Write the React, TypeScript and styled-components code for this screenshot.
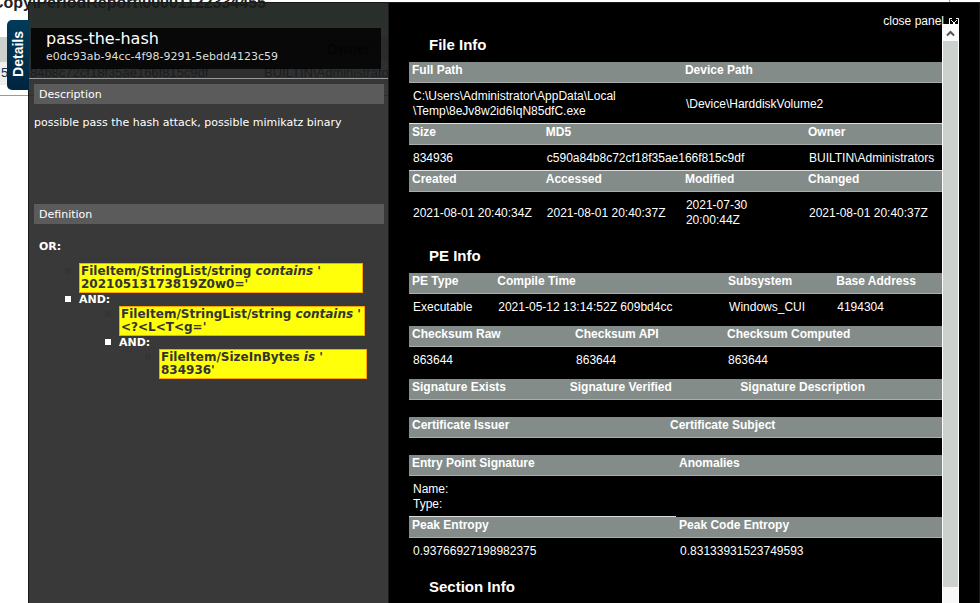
import React from 'react';
import styled, { createGlobalStyle } from 'styled-components';

const GlobalStyle = createGlobalStyle`
  *, *::before, *::after { box-sizing: border-box; }
  body { margin: 0; background: #fff; font-family: "Liberation Sans", Arial, sans-serif; }
  h1, h2, h3, p, ul { margin: 0; padding: 0; }
  button { border: 0; padding: 0; background: none; font: inherit; cursor: pointer; }
`;

const Page = styled.div`
  position: relative;
  min-height: 100vh;
  overflow: hidden;
`;

const Backdrop = styled.div`
  position: absolute;
  inset: 0;
  overflow: hidden;
`;

const BackTitle = styled.div`
  height: 45px;
  margin: -8px 30px 0 -8px;
  border-right: 1px solid #999;
  font-size: 16px;
  line-height: 22px;
  font-weight: bold;
  color: #222;
  white-space: nowrap;
`;

const BackRow = styled.div<{ $head?: boolean }>`
  display: grid;
  grid-template-columns: 264px 1fr;
  height: ${(p) => (p.$head ? 25 : 23)}px;
  padding-top: ${(p) => (p.$head ? 4 : 3)}px;
  background: ${(p) => (p.$head ? '#cdd1ce' : '#eeeeee')};
  color: ${(p) => (p.$head ? '#000' : '#0b3550')};
  font-size: ${(p) => (p.$head ? 14 : 13)}px;
  line-height: 16px;
  font-weight: ${(p) => (p.$head ? 'bold' : 'normal')};
`;

const BackCell = styled.span<{ $indent?: number }>`
  padding-left: ${(p) => p.$indent || 0}px;
  white-space: nowrap;
`;

const BackRule = styled.div`
  height: 11px;
  border-bottom: 1px solid #999;
`;

const Tab = styled.button`
  position: absolute;
  left: 7px;
  top: 20px;
  width: 22px;
  height: 70px;
  border-radius: 5px 0 0 5px;
  background: linear-gradient(#003c5a, #002540);
  color: #fff;
  font-size: 14px;
  font-weight: bold;
`;

const TabLabel = styled.span`
  display: inline-block;
  writing-mode: vertical-rl;
  transform: rotate(180deg);
  line-height: 20px;
`;

const Drawer = styled.section`
  position: relative;
  display: flex;
  margin: 2px 0 0 28px;
  height: calc(100vh - 2px);
  border-left: 1px solid #1a1a1a;
`;

const Summary = styled.aside`
  flex: 0 0 360px;
  border-top: 1px solid #1a1a1a;
  border-right: 1px solid #1a1a1a;
  background: rgba(28, 28, 28, 0.87);
  color: #fff;
  font-family: "DejaVu Sans", Verdana, sans-serif;
  font-size: 11px;
  line-height: 13px;
`;

const SummaryHead = styled.header`
  padding: 25px 7px 9px 2px;
  border-bottom: 1px solid #999;
  background: linear-gradient(rgba(20, 32, 24, 0.42), rgba(20, 20, 20, 0.22));
`;

const TitleBox = styled.div`
  padding: 1px 15px 5px;
  background: rgba(0, 0, 0, 0.82);
`;

const Title = styled.h1`
  font-size: 16px;
  line-height: 20px;
  font-weight: normal;
`;

const Guid = styled.p`
  line-height: 15px;
  color: #ddd;
`;

const Block = styled.section<{ $height?: number }>`
  min-height: ${(p) => p.$height || 0}px;
  margin: 5px 4px 0 5px;
`;

const BlockTitle = styled.h2`
  padding: 4px 5px 3px;
  background: #5b5b5b;
  font-size: 11px;
  line-height: 13px;
  font-weight: normal;
`;

const Note = styled.p`
  margin-top: 12px;
`;

const Logic = styled.div`
  margin: 16px 21px 0 5px;
  font-weight: bold;
`;

const Branch = styled.ul<{ $root?: boolean }>`
  padding-left: 26px;
  margin-top: ${(p) => (p.$root ? 10 : 0)}px;
  margin-right: ${(p) => (p.$root ? 0 : -2)}px;
  list-style: none;
`;

const Node = styled.li<{ $faint?: boolean }>`
  display: grid;
  grid-template-columns: 6px minmax(0, 1fr);
  column-gap: 8px;

  &::before {
    content: '';
    height: 6px;
    margin-top: ${(p) => (p.$faint ? 5 : 3)}px;
    background: ${(p) => (p.$faint ? '#333633' : '#fff')};
  }
`;

const Condition = styled.div`
  padding: 1px;
  border: 1px solid #ffa500;
  background: #ffff0a;
  color: #333;
  font-size: 12px;
`;

const Info = styled.main`
  position: relative;
  flex: 1;
  min-width: 0;
  display: flex;
  padding: 21px 20px 0 20px;
  border-top: 1px solid #1a1a1a;
  border-right: 1px solid #1a1a1a;
  background: #000;
  color: #fff;
  font-size: 12px;
  line-height: 15px;
`;

const ClosePanel = styled.button`
  position: absolute;
  top: 11px;
  right: 20px;
  display: flex;
  align-items: center;
  gap: 5px;
  color: #fff;
`;

const Content = styled.div`
  flex: 1;
  min-width: 0;
  overflow: hidden;
`;

const Heading = styled.h2<{ $first?: boolean }>`
  padding: ${(p) => (p.$first ? 12 : 15)}px 20px 8px;
  font-size: 15px;
  line-height: 18px;
`;

const Sheet = styled.table<{ $gap?: boolean }>`
  width: 100%;
  table-layout: fixed;
  border-collapse: separate;
  border-spacing: 0;
  margin-bottom: ${(p) => (p.$gap ? 7 : 0)}px;
`;

const Th = styled.th`
  height: 21px;
  padding: 1px 3px 4px;
  border-bottom: 1px solid #a9adab;
  background: #848c89;
  text-align: left;
  vertical-align: top;
  white-space: nowrap;
`;

const Td = styled.td<{ $ruled?: boolean }>`
  padding: 6px 0 4px 4px;
  border-bottom: ${(p) => (p.$ruled ? '1px solid #ddd' : '0')};
  vertical-align: middle;
`;

const Scrollbar = styled.div`
  position: relative;
  flex: 0 0 17px;
  display: flex;
  flex-direction: column;
  border: solid #fff;
  border-width: 0 1px;
  background: #f7f7f7;
`;

const ScrollUp = styled.button`
  display: flex;
  justify-content: center;
  height: 17px;
  padding-top: 6px;
  background: #fafafa;
`;

const Thumb = styled.div`
  flex: 1;
  margin-bottom: 16px;
  background: #cdd1ce;
`;

type Cell = { text: React.ReactNode; span?: number };
type Pair = { head: Cell[]; body: Cell[]; rules?: boolean[] };

const c = (text: React.ReactNode, span = 1): Cell => ({ text, span });

const ColSet = styled.col<{ $w: string }>`
  width: ${(p) => p.$w};
`;

function InfoTable({ cols, pairs, gap }: { cols: string[]; pairs: Pair[]; gap?: boolean }) {
  return (
    <Sheet $gap={gap}>
      <colgroup>
        {cols.map((w, i) => <ColSet key={i} $w={w} />)}
      </colgroup>
      <tbody>
        {pairs.map((pair, i) => (
          <React.Fragment key={i}>
            <tr>{pair.head.map((h, j) => <Th key={j} colSpan={h.span}>{h.text}</Th>)}</tr>
            <tr>{pair.body.map((b, j) => <Td key={j} colSpan={b.span} $ruled={pair.rules?.[j]}>{b.text}</Td>)}</tr>
          </React.Fragment>
        ))}
      </tbody>
    </Sheet>
  );
}

export default function App() {
  return (
    <Page>
      <GlobalStyle />
      <Backdrop aria-hidden="true">
        <BackTitle>Copy\PeriodReport\00001122334455</BackTitle>
        <BackRow $head>
          <BackCell $indent={109}>MD5</BackCell>
          <BackCell $indent={63}>Owner</BackCell>
        </BackRow>
        <BackRow>
          <BackCell $indent={1}>590a84b8c72cf18f35ae166f815c9df</BackCell>
          <BackCell>BUILTIN\Administrators</BackCell>
        </BackRow>
        <BackRule />
      </Backdrop>
      <Drawer>
        <Summary>
          <SummaryHead>
            <TitleBox>
              <Title>pass-the-hash</Title>
              <Guid>e0dc93ab-94cc-4f98-9291-5ebdd4123c59</Guid>
            </TitleBox>
          </SummaryHead>
          <Block $height={115}>
            <BlockTitle>Description</BlockTitle>
            <Note>possible pass the hash attack, possible mimikatz binary</Note>
          </Block>
          <Block>
            <BlockTitle>Definition</BlockTitle>
            <Logic>
              OR:
              <Branch $root>
                <Node $faint>
                  <Condition>FileItem/StringList/string <em>contains</em> '<br />20210513173819Z0w0='</Condition>
                </Node>
                <Node>
                  <div>
                    AND:
                    <Branch>
                      <Node $faint>
                        <Condition>FileItem/StringList/string <em>contains</em> '<br />&lt;?&lt;L&lt;T&lt;g='</Condition>
                      </Node>
                      <Node>
                        <div>
                          AND:
                          <Branch>
                            <Node $faint>
                              <Condition>FileItem/SizeInBytes <em>is</em> '<br />834936'</Condition>
                            </Node>
                          </Branch>
                        </div>
                      </Node>
                    </Branch>
                  </div>
                </Node>
              </Branch>
            </Logic>
          </Block>
        </Summary>
        <Info>
          <ClosePanel>
            close panel
            <svg width="10" height="10" viewBox="0 0 10 10" fill="none" stroke="#fff" aria-hidden="true">
              <path d="M3 1.5H.5v8h9v-8H7M2 3l3 3 3-3M5 6 2 9M5 6l3 3" />
            </svg>
          </ClosePanel>
          <Content>
            <Heading $first>File Info</Heading>
            <InfoTable
              cols={['25.1%', '26.1%', '23.1%', '25.7%']}
              pairs={[
                {
                  head: [c('Full Path', 2), c('Device Path', 2)],
                  body: [c(<>C:\Users\Administrator\AppData\Local<br />\Temp\8eJv8w2id6IqN85dfC.exe</>, 2), c('\\Device\\HarddiskVolume2', 2)],
                  rules: [true, true],
                },
                {
                  head: [c('Size'), c('MD5', 2), c('Owner')],
                  body: [c('834936'), c('c590a84b8c72cf18f35ae166f815c9df', 2), c('BUILTIN\\Administrators')],
                  rules: [true, true, true],
                },
                {
                  head: [c('Created'), c('Accessed'), c('Modified'), c('Changed')],
                  body: [c('2021-08-01 20:40:34Z'), c('2021-08-01 20:40:37Z'), c(<>2021-07-30<br />20:00:44Z</>), c('2021-08-01 20:40:37Z')],
                },
              ]}
            />
            <Heading>PE Info</Heading>
            <InfoTable
              gap
              cols={['16%', '43.3%', '20.3%', '20.4%']}
              pairs={[{
                head: [c('PE Type'), c('Compile Time'), c('Subsystem'), c('Base Address')],
                body: [c('Executable'), c('2021-05-12 13:14:52Z 609bd4cc'), c('Windows_CUI'), c('4194304')],
              }]}
            />
            <InfoTable
              gap
              cols={['30.6%', '28.5%', '40.9%']}
              pairs={[{
                head: [c('Checksum Raw'), c('Checksum API'), c('Checksum Computed')],
                body: [c('863644'), c('863644'), c('863644')],
              }]}
            />
            <InfoTable
              gap
              cols={['29.6%', '32%', '38.4%']}
              pairs={[{
                head: [c('Signature Exists'), c('Signature Verified'), c('Signature Description')],
                body: [c(''), c(''), c('')],
              }]}
            />
            <InfoTable
              gap
              cols={['48.4%', '51.6%']}
              pairs={[{ head: [c('Certificate Issuer'), c('Certificate Subject')], body: [c(''), c('')] }]}
            />
            <InfoTable
              cols={['50.1%', '49.9%']}
              pairs={[
                {
                  head: [c('Entry Point Signature'), c('Anomalies')],
                  body: [c(<>Name:<br />Type:</>), c('')],
                  rules: [true, false],
                },
                {
                  head: [c('Peak Entropy'), c('Peak Code Entropy')],
                  body: [c('0.93766927198982375'), c('0.83133931523749593')],
                },
              ]}
            />
            <Heading>Section Info</Heading>
          </Content>
          <Scrollbar>
            <ScrollUp aria-label="Scroll up">
              <svg width="9" height="7" viewBox="0 0 9 7" fill="none" stroke="#555" strokeWidth="2" aria-hidden="true">
                <path d="M1 5.5 4.5 2 8 5.5" />
              </svg>
            </ScrollUp>
            <Thumb />
          </Scrollbar>
        </Info>
      </Drawer>
      <Tab><TabLabel>Details</TabLabel></Tab>
    </Page>
  );
}
